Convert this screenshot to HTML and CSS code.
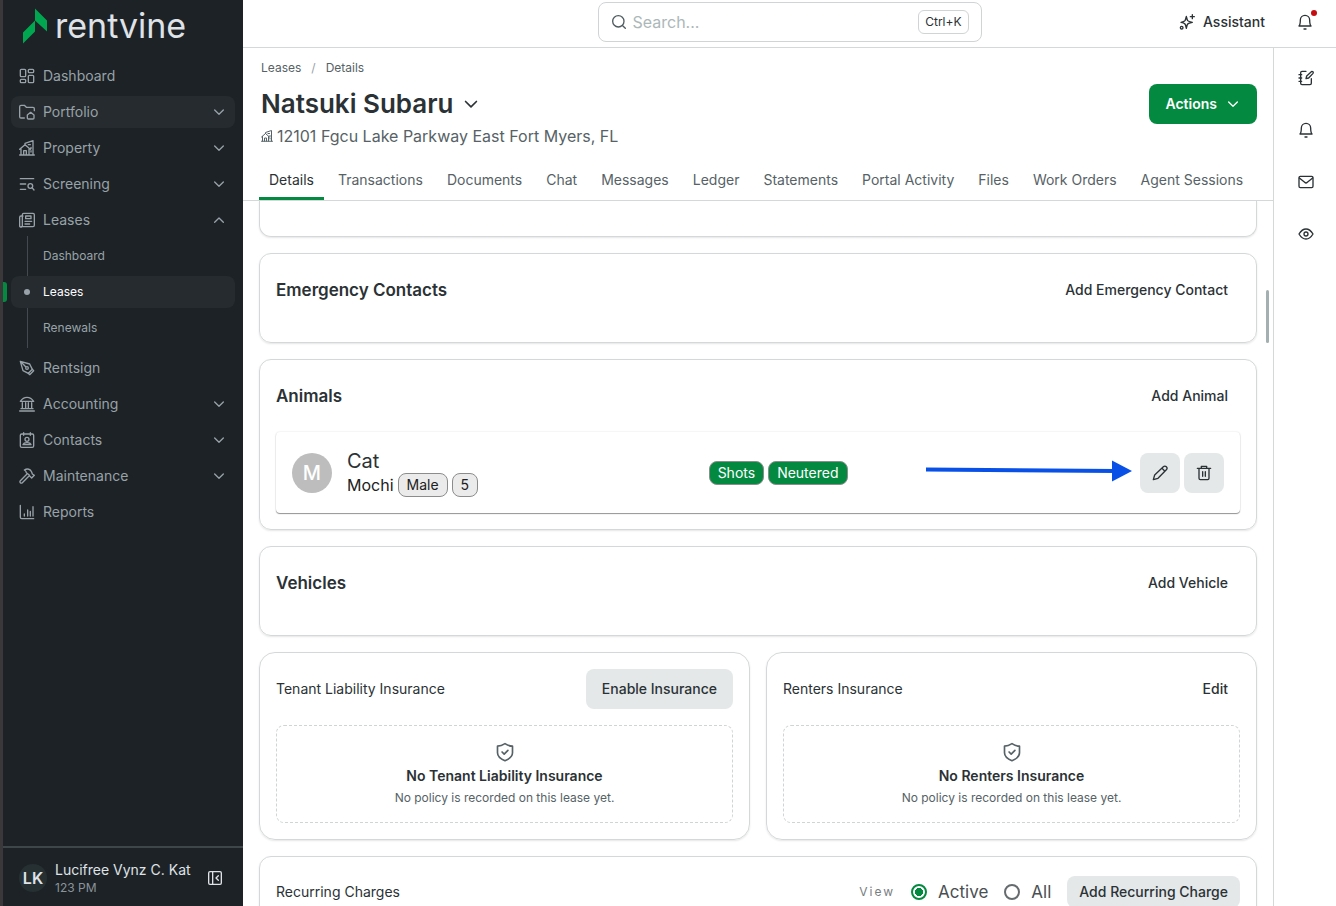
FILE: index.html
```html
<!DOCTYPE html>
<html lang="en">
<head>
    <meta charset="UTF-8">
    <meta name="viewport" content="width=device-width, initial-scale=1.0">
    <title>Natsuki Subaru - Leases</title>
    <link rel="stylesheet" href="styles.css">
</head>
<body>
    <!-- Icons -->
    <svg class="sprite" aria-hidden="true">
        <symbol id="i-dashboard" viewBox="0 0 24 24"><rect x="2" y="2" width="8" height="11" rx="1.5"/><rect x="2" y="17" width="8" height="5" rx="1.5"/><rect x="14" y="2" width="8" height="5" rx="1.5"/><rect x="14" y="11" width="8" height="11" rx="1.5"/></symbol>
        <symbol id="i-folder" viewBox="0 0 24 24"><path d="M8 21H3a2 2 0 0 1-2-2V4a2 2 0 0 1 2-2h5l3 3h10a2 2 0 0 1 2 2v3"/><path d="M12.500 16.500 17.500 12.500l5 4V21a1.500 1.500 0 0 1-1.500 1.500h-7a1.500 1.500 0 0 1-1.500-1.500z"/></symbol>
        <symbol id="i-property" viewBox="0 0 24 24"><path d="M1 22.500h22M3 22V13M15 22V13M1 14l8-7 8 7M7 22v-6h4v6M9 7V5l12-4v21M14 7h3M18 11v2M18 16v2"/></symbol>
        <symbol id="i-screening" viewBox="0 0 24 24"><path d="M2 4h20M2 12h8M2 20h8"/><circle cx="17" cy="15" r="3.500"/><path d="m19.500 17.500 3 3.500"/></symbol>
        <symbol id="i-leases" viewBox="0 0 24 24"><path d="M6 6H3a2 2 0 0 0-2 2v12a2 2 0 0 0 4 1V4a2 2 0 0 1 2-2h14a2 2 0 0 1 2 2v16a2 2 0 0 1-2 2H3"/><rect x="10" y="6" width="8" height="4"/><path d="M9 14h10M9 18h7"/></symbol>
        <symbol id="i-pen" viewBox="0 0 24 24"><path d="m2 2 4 14 8 4 6-6-4-8zM2 2l8 8"/><circle cx="12" cy="12" r="2"/><path d="m14 20 2 2 6-6-2-2"/></symbol>
        <symbol id="i-bank" viewBox="0 0 24 24"><path d="M1 22.500h22M3 19h18M5 10v9M10 10v9M14 10v9M19 10v9M2 8c2-3 6-6 10-6s8 3 10 6z"/></symbol>
        <symbol id="i-contacts" viewBox="0 0 24 24"><rect x="2" y="3" width="20" height="20" rx="2"/><circle cx="12" cy="11" r="3"/><path d="M6 19c1-3 3-3 6-3s5 0 6 3zM7 1v4M17 1v4"/></symbol>
        <symbol id="i-hammer" viewBox="0 0 24 24"><path d="m12 9-10 10a2 2 0 0 0 3 3L15 12M8 3c5-3 9-1 11 3l1 3 3 2-4 4-3-3-1-2-4-3c0-2-1-3-3-4z"/></symbol>
        <symbol id="i-chart" viewBox="0 0 24 24"><path d="M2 2v18a2 2 0 0 0 2 2h18M8 18v-3M13 18V9M17 18v-7M21 18V4"/></symbol>
        <symbol id="i-down" viewBox="0 0 24 24"><path d="m5.500 9 6.500 6.500L18.500 9"/></symbol>
        <symbol id="i-up" viewBox="0 0 24 24"><path d="m5.500 15.500 6.500-6.500 6.500 6.500"/></symbol>
        <symbol id="i-panel" viewBox="0 0 24 24"><rect x="2.500" y="2.500" width="19" height="19" rx="2"/><path d="M8.500 3v18M17 8.500 13.500 12l3.500 3.500"/></symbol>
        <symbol id="i-search" viewBox="0 0 24 24"><circle cx="11" cy="11" r="8.500"/><path d="m17.500 17.500 4 4"/></symbol>
        <symbol id="i-sparkle" viewBox="0 0 24 24"><path d="M11 3.500c.5 2 1 5 2 6.500 1 1.200 4 2 7 2.500-3 .5-6 1.300-7 2.500s-1.500 4.500-2 6.500c-.5-2-1-5.300-2-6.500s-3-2-6-2.500c3-.5 5-1.300 6-2.500 1-1.500 1.500-4.500 2-6.500zM20 1v6M17 4h6"/><circle cx="4" cy="20.500" r="2"/></symbol>
        <symbol id="i-bell" viewBox="0 0 24 24"><path d="M3 18c2-2 2-4 2-9a7 7 0 0 1 14 0c0 5 0 7 2 9zM10.500 22.500h3"/></symbol>
        <symbol id="i-note" viewBox="0 0 24 24"><path d="M12 2H6a2 2 0 0 0-2 2v16a2 2 0 0 0 2 2h12a2 2 0 0 0 2-2v-7M1.500 7h4M1.500 12h4M1.500 17h4M12 13l1-4 7-6.500a1.800 1.800 0 0 1 2.500 2.500L16 12z"/></symbol>
        <symbol id="i-mail" viewBox="0 0 24 24"><rect x="1.500" y="3.500" width="21" height="17" rx="2"/><path d="m2 6 8 6.500c1 1 3 1 4 0L22 6"/></symbol>
        <symbol id="i-eye" viewBox="0 0 24 24"><path d="M1.500 12c3-5 6.500-7.500 10.500-7.500s7.500 2.500 10.500 7.500c-3 5-6.500 7.500-10.500 7.500S4.500 17 1.500 12z"/><circle cx="12" cy="12" r="3"/></symbol>
        <symbol id="i-pencil" viewBox="0 0 24 24"><path d="m2 22 2-7L17 2.500a2.800 2.800 0 0 1 4.500 4.500L9 20zM15 5l4 4"/></symbol>
        <symbol id="i-trash" viewBox="0 0 24 24"><path d="M2 5h20M8 5V2h8v3M4.500 5v15a2 2 0 0 0 2 2h11a2 2 0 0 0 2-2V5M10 10v7M14 10v7"/></symbol>
        <symbol id="i-shield" viewBox="0 0 24 24"><path d="M12 2c3 2 6 3 9 3v8c0 4.500-4 7.500-9 9.500-5-2-9-5-9-9.500V5c3 0 6-1 9-3zM8.500 12l2.500 2.500 4.500-4.500"/></symbol>
    </svg>

    <div class="app">
        <aside class="sidebar">
            <a class="logo" href="#">
                <svg class="logo-mark" viewBox="0 0 24 36"><path d="M0 24.500 12 12.500V23.500L0 35.500zM12 .5l12 12v11l-12-11z"/></svg>
                <span>rentvine</span>
            </a>
            <nav class="nav">
                <a class="nav-item" href="#"><svg class="icon"><use href="#i-dashboard"/></svg><span>Dashboard</span></a>
                <a class="nav-item hovered" href="#"><svg class="icon"><use href="#i-folder"/></svg><span>Portfolio</span><svg class="icon"><use href="#i-down"/></svg></a>
                <a class="nav-item" href="#"><svg class="icon"><use href="#i-property"/></svg><span>Property</span><svg class="icon"><use href="#i-down"/></svg></a>
                <a class="nav-item" href="#"><svg class="icon"><use href="#i-screening"/></svg><span>Screening</span><svg class="icon"><use href="#i-down"/></svg></a>
                <div class="nav-group">
                    <a class="nav-item" href="#"><svg class="icon"><use href="#i-leases"/></svg><span>Leases</span><svg class="icon"><use href="#i-up"/></svg></a>
                    <div class="subnav">
                        <a class="sub-item" href="#">Dashboard</a>
                        <a class="sub-item active" href="#">Leases</a>
                        <a class="sub-item" href="#">Renewals</a>
                    </div>
                </div>
                <a class="nav-item" href="#"><svg class="icon"><use href="#i-pen"/></svg><span>Rentsign</span></a>
                <a class="nav-item" href="#"><svg class="icon"><use href="#i-bank"/></svg><span>Accounting</span><svg class="icon"><use href="#i-down"/></svg></a>
                <a class="nav-item" href="#"><svg class="icon"><use href="#i-contacts"/></svg><span>Contacts</span><svg class="icon"><use href="#i-down"/></svg></a>
                <a class="nav-item" href="#"><svg class="icon"><use href="#i-hammer"/></svg><span>Maintenance</span><svg class="icon"><use href="#i-down"/></svg></a>
                <a class="nav-item" href="#"><svg class="icon"><use href="#i-chart"/></svg><span>Reports</span></a>
            </nav>
            <div class="user">
                <span class="user-avatar">LK</span>
                <div class="user-text">
                    <div class="user-name">Lucifree Vynz C. Kat</div>
                    <div class="user-time">123 PM</div>
                </div>
                <button type="button" class="bare" aria-label="Collapse sidebar"><svg class="icon"><use href="#i-panel"/></svg></button>
            </div>
        </aside>

        <div class="page">
            <header class="topbar">
                <label class="search">
                    <svg class="icon"><use href="#i-search"/></svg>
                    <input type="text" placeholder="Search..." aria-label="Search">
                    <kbd>Ctrl+K</kbd>
                </label>
                <div class="topbar-right">
                    <button type="button" class="bare assistant"><svg class="icon"><use href="#i-sparkle"/></svg>Assistant</button>
                    <button type="button" class="bare notify" aria-label="Notifications"><svg class="icon"><use href="#i-bell"/></svg><span class="dot"></span></button>
                </div>
            </header>

            <div class="body-row">
                <main class="main">
                    <div class="lease-header">
                        <div class="breadcrumb"><a href="#">Leases</a><span class="slash">/</span><a href="#">Details</a></div>
                        <div class="title-row">
                            <div class="title">
                                <h1>Natsuki Subaru</h1>
                                <button type="button" class="bare" aria-label="Switch lease"><svg class="icon large"><use href="#i-down"/></svg></button>
                            </div>
                            <button type="button" class="btn primary">Actions<svg class="icon"><use href="#i-down"/></svg></button>
                        </div>
                        <div class="address"><svg class="icon small"><use href="#i-property"/></svg>12101 Fgcu Lake Parkway East Fort Myers, FL</div>
                        <nav class="tabs">
                            <a class="tab active" href="#">Details</a>
                            <a class="tab" href="#">Transactions</a>
                            <a class="tab" href="#">Documents</a>
                            <a class="tab" href="#">Chat</a>
                            <a class="tab" href="#">Messages</a>
                            <a class="tab" href="#">Ledger</a>
                            <a class="tab" href="#">Statements</a>
                            <a class="tab" href="#">Portal Activity</a>
                            <a class="tab" href="#">Files</a>
                            <a class="tab" href="#">Work Orders</a>
                            <a class="tab" href="#">Agent Sessions</a>
                        </nav>
                    </div>

                    <div class="content">
                        <section class="card card-tail"></section>

                        <section class="card">
                            <div class="card-head">
                                <h2>Emergency Contacts</h2>
                                <button type="button" class="btn text">Add Emergency Contact</button>
                            </div>
                        </section>

                        <section class="card">
                            <div class="card-head">
                                <h2>Animals</h2>
                                <button type="button" class="btn text">Add Animal</button>
                            </div>
                            <div class="animal">
                                <span class="animal-avatar">M</span>
                                <div class="animal-info">
                                    <div class="animal-type">Cat</div>
                                    <div class="animal-name">Mochi <span class="chip">Male</span><span class="chip">5</span></div>
                                </div>
                                <div class="animal-tags">
                                    <span class="chip green">Shots</span><span class="chip green">Neutered</span>
                                </div>
                                <button type="button" class="btn square" aria-label="Edit"><svg class="icon"><use href="#i-pencil"/></svg></button>
                                <button type="button" class="btn square" aria-label="Delete"><svg class="icon"><use href="#i-trash"/></svg></button>
                                <svg class="arrow" viewBox="0 0 206 22"><path d="M0 7.500 190 9v4L0 11.500z"/><path d="M186 0.500 206 11 186 21.500z"/></svg>
                            </div>
                        </section>

                        <section class="card">
                            <div class="card-head">
                                <h2>Vehicles</h2>
                                <button type="button" class="btn text">Add Vehicle</button>
                            </div>
                        </section>

                        <div class="two-cols">
                            <section class="card rounder">
                                <div class="card-head">
                                    <h3>Tenant Liability Insurance</h3>
                                    <button type="button" class="btn">Enable Insurance</button>
                                </div>
                                <div class="empty">
                                    <svg class="icon large"><use href="#i-shield"/></svg>
                                    <strong>No Tenant Liability Insurance</strong>
                                    <p>No policy is recorded on this lease yet.</p>
                                </div>
                            </section>
                            <section class="card rounder">
                                <div class="card-head">
                                    <h3>Renters Insurance</h3>
                                    <button type="button" class="btn text">Edit</button>
                                </div>
                                <div class="empty">
                                    <svg class="icon large"><use href="#i-shield"/></svg>
                                    <strong>No Renters Insurance</strong>
                                    <p>No policy is recorded on this lease yet.</p>
                                </div>
                            </section>
                        </div>

                        <section class="card">
                            <div class="card-head compact">
                                <h3>Recurring Charges</h3>
                                <div class="view">
                                    <span class="view-label">View</span>
                                    <label><input type="radio" name="view" value="active" checked>Active</label>
                                    <label><input type="radio" name="view" value="all">All</label>
                                    <button type="button" class="btn short">Add Recurring Charge</button>
                                </div>
                            </div>
                        </section>
                        <div class="scroll-thumb"></div>
                    </div>
                </main>

                <aside class="rail">
                    <button type="button" class="bare" aria-label="Notes"><svg class="icon"><use href="#i-note"/></svg></button>
                    <button type="button" class="bare" aria-label="Reminders"><svg class="icon"><use href="#i-bell"/></svg></button>
                    <button type="button" class="bare" aria-label="Mail"><svg class="icon"><use href="#i-mail"/></svg></button>
                    <button type="button" class="bare" aria-label="Watch"><svg class="icon"><use href="#i-eye"/></svg></button>
                </aside>
            </div>
        </div>
    </div>
</body>
</html>
```

FILE: styles.css
```css
* {
    box-sizing: border-box;
}
body {
    margin: 0;
    font-family: Inter, "Liberation Sans", sans-serif;
    font-size: 14px;
    line-height: 20px;
    color: #2b3235;
    background-color: #fff;
}
h1, h2, h3, p {
    margin: 0;
}
a {
    color: inherit;
    text-decoration: none;
}
button, input {
    font: inherit;
    color: inherit;
}
.sprite {
    display: none;
}
.icon {
    flex: none;
    display: block;
    width: 16px;
    height: 16px;
    fill: none;
    stroke: currentColor;
    stroke-width: 2;
    stroke-linecap: round;
    stroke-linejoin: round;
}
.icon.large {
    width: 20px;
    height: 20px;
}
.icon.small {
    width: 12px;
    height: 12px;
}
.bare {
    display: flex;
    align-items: center;
    padding: 0;
    border: none;
    background: none;
    cursor: pointer;
}
.app {
    display: flex;
    height: 100vh;
    overflow: hidden;
}

/* Sidebar */
.sidebar {
    flex: none;
    display: flex;
    flex-direction: column;
    width: 243px;
    border-left: 3px solid #3a3838;
    background-color: #1d2226;
    color: #98a2a8;
}
.logo {
    display: flex;
    align-items: center;
    gap: 8px;
    height: 52px;
    padding-left: 20px;
    color: #dfe2e6;
    font-size: 34px;
    line-height: 52px;
}
.logo-mark {
    width: 24px;
    height: 36px;
    fill: #00a650;
}
.nav {
    flex: 1;
    display: flex;
    flex-direction: column;
    gap: 4px;
    padding: 8px;
}
.nav-item {
    display: flex;
    align-items: center;
    gap: 8px;
    height: 32px;
    padding: 0 8px;
    border-radius: 8px;
}
.nav-item span {
    flex: 1;
}
.nav-item.hovered {
    background-color: #262b2f;
}
.subnav {
    display: flex;
    flex-direction: column;
    gap: 4px;
    padding: 4px 0;
    background: linear-gradient(#434a4f, #434a4f) 16px 0 / 1px 100% no-repeat;
}
.sub-item {
    position: relative;
    height: 32px;
    padding-left: 32px;
    border-radius: 8px;
    font-size: 12px;
    line-height: 32px;
}
.sub-item.active {
    background-color: #262b2f;
    color: #fff;
}
.sub-item.active::before {
    content: "";
    position: absolute;
    left: -8px;
    top: 6px;
    width: 4px;
    height: 20px;
    border-radius: 0 3px 3px 0;
    background-color: #048a40;
}
.sub-item.active::after {
    content: "";
    position: absolute;
    left: 13px;
    top: 13px;
    width: 6px;
    height: 6px;
    border-radius: 50%;
    background-color: #98a2a8;
}
.user {
    display: flex;
    align-items: center;
    gap: 8px;
    height: 60px;
    padding: 2px 20px 0 16px;
    border-top: 2px solid #3f464a;
    color: #dfe2e6;
}
.user-avatar {
    width: 28px;
    height: 28px;
    border-radius: 50%;
    background-color: #263033;
    font-size: 16px;
    font-weight: 600;
    line-height: 28px;
    text-align: center;
}
.user-text {
    flex: 1;
    white-space: nowrap;
}
.user-time {
    color: #89949a;
    font-size: 12px;
    line-height: 16px;
}

/* Top bar */
.page {
    flex: 1;
    display: flex;
    flex-direction: column;
    min-width: 0;
}
.topbar {
    flex: none;
    display: grid;
    grid-template-columns: 1fr 384px 1fr;
    align-items: center;
    height: 48px;
    padding-bottom: 4px;
    border-bottom: 1px solid #d5d8d9;
}
.search {
    grid-column: 2;
    display: flex;
    align-items: center;
    gap: 6px;
    height: 40px;
    padding: 0 12px;
    border: 1px solid #d0d4d5;
    border-radius: 8px;
    color: #4f5b5f;
}
.search input {
    flex: 1;
    min-width: 0;
    padding: 0;
    border: none;
    outline: none;
    background: none;
    font-size: 16px;
}
.search input::placeholder {
    color: #acb7b9;
}
.search kbd {
    height: 24px;
    padding: 0 6px;
    border: 1px solid #d0d4d5;
    border-radius: 6px;
    color: #2b3235;
    font-family: inherit;
    font-size: 12px;
    line-height: 22px;
}
.topbar-right {
    display: flex;
    justify-content: flex-end;
    gap: 32px;
    padding-right: 23px;
}
.assistant {
    gap: 8px;
    font-weight: 500;
}
.notify {
    position: relative;
}
.dot {
    position: absolute;
    top: -2px;
    right: -4px;
    width: 6px;
    height: 6px;
    border-radius: 50%;
    background-color: #c40d12;
}

/* Lease header */
.body-row {
    flex: 1;
    display: flex;
    min-height: 0;
}
.main {
    flex: 1;
    display: flex;
    flex-direction: column;
    min-width: 0;
}
.lease-header {
    padding: 10px 16px 0;
    border-bottom: 1px solid #d5d8d9;
}
.breadcrumb {
    display: flex;
    gap: 10px;
    padding-left: 2px;
    color: #566266;
    font-size: 12px;
}
.slash {
    color: #98a2a8;
}
.title-row {
    display: flex;
    align-items: center;
    justify-content: space-between;
    padding: 6px 0 0 2px;
}
.title {
    display: flex;
    align-items: center;
    gap: 8px;
}
h1 {
    font-size: 26px;
    font-weight: 600;
    line-height: 36px;
}
.address {
    display: flex;
    align-items: center;
    gap: 4px;
    padding: 0 0 12px 2px;
    color: #566266;
    font-size: 16px;
    line-height: 24px;
}
.tabs {
    display: flex;
    gap: 4px;
    height: 40px;
    white-space: nowrap;
}
.tab {
    padding: 0 10px;
    border-bottom: 3px solid transparent;
    color: #566266;
    line-height: 40px;
}
.tab.active {
    border-bottom-color: #048a40;
    color: #2b3235;
}

/* Buttons */
.btn {
    display: flex;
    align-items: center;
    justify-content: center;
    height: 40px;
    padding: 0 16px;
    border: none;
    border-radius: 8px;
    background-color: #e4e8e9;
    font-weight: 500;
    white-space: nowrap;
    cursor: pointer;
}
.btn.primary {
    gap: 8px;
    background-color: #048a40;
    color: #fff;
    font-weight: 600;
}
.btn.text {
    padding: 0 12px;
    background: none;
}
.btn.square {
    width: 40px;
    padding: 0;
    margin-left: 4px;
}
.btn.short {
    height: 32px;
    padding: 0 12px;
}

/* Cards */
.content {
    position: relative;
    flex: 1;
    display: flex;
    flex-direction: column;
    gap: 16px;
    min-height: 0;
    padding: 0 16px;
    overflow: hidden;
}
.card {
    flex: none;
    padding: 16px;
    border: 1px solid #d5d8d9;
    border-radius: 12px;
    box-shadow: 0 1px 2px rgba(0, 0, 0, 0.1);
}
.card.rounder {
    border-radius: 16px;
}
.card-tail {
    height: 36px;
    border-top: none;
    border-radius: 0 0 12px 12px;
}
.card-head {
    display: flex;
    align-items: center;
    justify-content: space-between;
    height: 40px;
    margin-bottom: 16px;
}
.card-head.compact {
    height: 38px;
}
h2 {
    font-size: 17px;
    font-weight: 600;
}
h3 {
    font-size: 14px;
    font-weight: 400;
}
.two-cols {
    flex: none;
    display: grid;
    grid-template-columns: 1fr 1fr;
    gap: 16px;
}
.animal {
    position: relative;
    display: flex;
    align-items: center;
    height: 81px;
    padding: 0 16px;
    border-radius: 4px;
    box-shadow: 0 0 2px rgba(0, 0, 0, 0.14), 0 1px 1px rgba(0, 0, 0, 0.4);
}
.animal-avatar {
    width: 40px;
    height: 40px;
    margin-right: 15px;
    border-radius: 50%;
    background-color: #bdbdbd;
    color: #fff;
    font-size: 20px;
    font-weight: 500;
    line-height: 40px;
    text-align: center;
}
.animal-info {
    flex: 11;
}
.animal-type {
    font-size: 20px;
    line-height: 24px;
}
.animal-name {
    display: flex;
    align-items: center;
    gap: 4px;
    color: #212121;
    font-size: 16px;
    line-height: 24px;
}
.animal-tags {
    flex: 13;
    display: flex;
    gap: 4px;
}
.chip {
    height: 24px;
    padding: 0 8px;
    border: 1px solid #8c8c8c;
    border-radius: 8px;
    background-color: #ebebeb;
    color: #212121;
    font-size: 14px;
    line-height: 22px;
}
.chip.green {
    background-color: #048a40;
    color: #fff;
}
.arrow {
    position: absolute;
    top: 28px;
    right: 108px;
    width: 206px;
    height: 22px;
    fill: #0850e6;
}
.empty {
    display: flex;
    flex-direction: column;
    align-items: center;
    gap: 4px;
    padding: 16px;
    border: 1px dashed #d0d4d5;
    border-radius: 8px;
    color: #566266;
}
.empty strong {
    color: #2b3235;
    font-weight: 600;
}
.empty p {
    font-size: 12px;
    line-height: 16px;
}
.view {
    display: flex;
    align-items: center;
    gap: 16px;
    color: #4a4f52;
    font-size: 17px;
}
.view-label {
    color: #777d80;
    font-size: 12px;
    letter-spacing: 2px;
}
.view label {
    display: flex;
    align-items: center;
    gap: 11px;
}
.view input {
    appearance: none;
    width: 16px;
    height: 16px;
    margin: 0;
    border: 2px solid #666b6e;
    border-radius: 50%;
}
.view input:checked {
    border-color: #048a40;
    background: radial-gradient(circle, #048a40 4px, transparent 4px);
}
.view .btn {
    color: #2b3235;
    font-size: 14px;
}
.scroll-thumb {
    position: absolute;
    top: 89px;
    right: 4px;
    width: 3px;
    height: 53px;
    border-radius: 2px;
    background-color: #a3afb0;
}

/* Right rail */
.rail {
    flex: none;
    display: flex;
    flex-direction: column;
    align-items: center;
    gap: 36px;
    width: 63px;
    padding: 22px 0 0 2px;
    border-left: 1px solid #d5d8d9;
}
```
